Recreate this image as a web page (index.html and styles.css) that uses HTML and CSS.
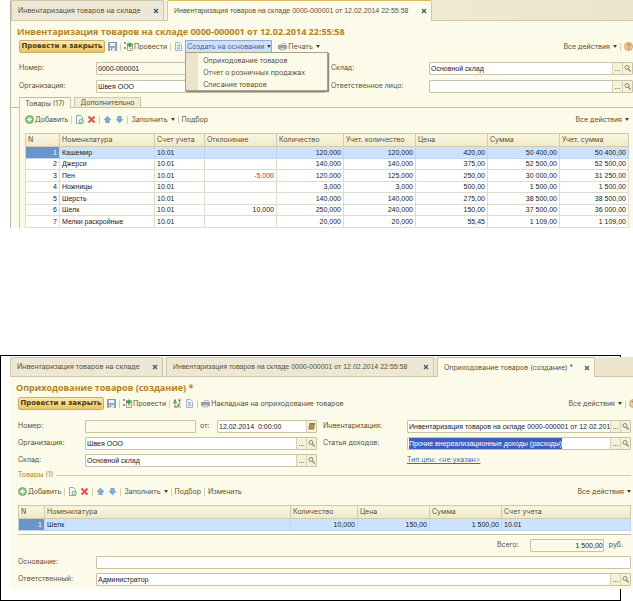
FILE: index.html
```html
<!DOCTYPE html>
<html lang="ru">
<head>
    <meta charset="UTF-8">
    <meta name="viewport" content="width=device-width, initial-scale=1.0">
    <title>Инвентаризация товаров на складе</title>
    <link rel="stylesheet" href="styles.css">
</head>
<body>
    <svg class="sprite" aria-hidden="true">
        <symbol id="i-save" viewBox="0 0 9 9">
            <path d="M.5.5h8v8h-8z" fill="#8fadcc" stroke="#7f9aba"/>
            <path d="M2 1h5v3H2z" fill="#f2f6fb"/>
            <path d="M2 6h5v3H2z" fill="#dbe5ef"/>
            <path d="M3 6.500h1V8H3z" fill="#56749a"/>
        </symbol>
        <symbol id="i-post" viewBox="0 0 9 9">
            <path d="M3.500 1.500h5v7h-5z" fill="#fffef4" stroke="#a8a68c"/>
            <path d="M5 4.500h2.500M5 6.500h2.500" stroke="#c9b672"/>
            <path d="M0 0h2v2H0zM0 5h2v2H0z" fill="#8a93a8"/>
            <path d="M3 2h2V0l3.500 3L5 6V4H3z" fill="#3ea544"/>
        </symbol>
        <symbol id="i-doc" viewBox="0 0 9 9">
            <path d="M1.500.5h4l2 2v6h-6z" fill="#e8f0f8" stroke="#a3b8d0"/>
            <path d="M3 3.500h3M3 5h3M3 6.500h3" stroke="#7f9dc0" stroke-width=".7"/>
        </symbol>
        <symbol id="i-print" viewBox="0 0 9 9">
            <path d="M2.500 3.500l1-2h4l-1 2z" fill="#fff" stroke="#aaa" stroke-width=".8"/>
            <path d="M.5 3.500h8v3h-8z" fill="#a9a9ad" stroke="#88888c" stroke-width=".8"/>
            <path d="M2 6h5v2H2z" fill="#e9e9ea" stroke="#99999c" stroke-width=".6"/>
        </symbol>
        <symbol id="i-dtkt" viewBox="0 0 9 9">
            <path d="M2 .5L.7 4H3.300L2 .5M2 3.500v1M5 4.500v4M7.500 4.500L5 6.500l2.500 2" fill="none" stroke="#3b9848"/>
            <path d="M5 1h3M6.500 1v2.500M1 8h3M1.500 5.500l2 2.500" fill="none" stroke="#c94f42"/>
        </symbol>
        <symbol id="i-add" viewBox="0 0 9 9">
            <circle cx="4.500" cy="4.500" r="4" fill="#7fbf7c" stroke="#6aa96b" stroke-width=".7"/>
            <path d="M4.500 2v5M2 4.500h5" stroke="#fff" stroke-width="1.500"/>
        </symbol>
        <symbol id="i-copy" viewBox="0 0 9 9">
            <path d="M1.500.5h4l2 2v6h-6z" fill="#f4f7fa" stroke="#93a6b8"/>
            <circle cx="6.200" cy="6.200" r="2.500" fill="#7cbd7c"/>
            <path d="M6.200 4.700v3M4.700 6.200h3" stroke="#fff" stroke-width=".9"/>
        </symbol>
        <symbol id="i-del" viewBox="0 0 9 9">
            <path d="M1.500 1.500l6 6M7.500 1.500l-6 6" stroke="#e0524a" stroke-width="2"/>
        </symbol>
        <symbol id="i-up" viewBox="0 0 9 9">
            <path d="M4.500 1.200L7.800 4.500H6.200V7.500h-3.400V4.500H1.200z" fill="#7db1dc" stroke="#5f97c8" stroke-width=".7"/>
        </symbol>
        <symbol id="i-down" viewBox="0 0 9 9">
            <path d="M4.500 7.800L7.800 4.500H6.200V1.500h-3.400v3H1.200z" fill="#7db1dc" stroke="#5f97c8" stroke-width=".7"/>
        </symbol>
        <symbol id="i-help" viewBox="0 0 9 9">
            <circle cx="4.500" cy="4.500" r="4" fill="#f3c99a" stroke="#d08e54" stroke-width=".8"/>
            <path d="M3.200 3.500c0-1.800 2.700-1.600 2.600 0 0 .9-1.300.9-1.300 1.900M4.500 6.200v1" fill="none" stroke="#b3502a" stroke-width=".9"/>
        </symbol>
        <symbol id="i-find" viewBox="0 0 9 9">
            <circle cx="4" cy="3.500" r="2" fill="none" stroke="#857d58" stroke-width=".9"/>
            <path d="M5.500 5.200L7.500 7.500" stroke="#857d58" stroke-width="1.200"/>
        </symbol>
        <symbol id="i-date" viewBox="0 0 9 9">
            <path d="M2.500 1h5.500l-1 6.500H1.500z" fill="#8b7b35"/>
            <path d="M3.300 3.500h3.500M3 5.500h3.500" stroke="#d9cd92" stroke-width=".7"/>
        </symbol>
        <symbol id="i-close" viewBox="0 0 6 6">
            <path d="M1 1l4 4M5 1L1 5" stroke="#3f5c76" stroke-width="1.300"/>
        </symbol>
    </svg>

    <section class="window inventory">
        <nav class="tabs">
            <div class="tab tab-list">Инвентаризация товаров на складе <button class="close" aria-label="Закрыть"><svg><use href="#i-close"/></svg></button></div>
            <div class="tab tab-doc active">Инвентаризация товаров на складе 0000-000001 от 12.02.2014 22:55:58 <button class="close" aria-label="Закрыть"><svg><use href="#i-close"/></svg></button></div>
        </nav>
        <h1>Инвентаризация товаров на складе 0000-000001 от 12.02.2014 22:55:58</h1>
        <div class="toolbar">
            <button class="primary">Провести и закрыть</button>
            <button aria-label="Записать"><svg class="icon"><use href="#i-save"/></svg></button>
            <i class="sep"></i>
            <button><svg class="icon"><use href="#i-post"/></svg>Провести</button>
            <i class="sep"></i>
            <button aria-label="Отчет"><svg class="icon"><use href="#i-doc"/></svg></button>
            <i class="sep"></i>
            <div class="dropdown">
                <button class="opened">Создать на основании<span class="arrow"></span></button>
                <div class="menu">
                    <button>Оприходование товаров</button>
                    <button>Отчет о розничных продажах</button>
                    <button>Списание товаров</button>
                </div>
            </div>
            <button><svg class="icon"><use href="#i-print"/></svg>Печать<span class="arrow"></span></button>
            <div class="right">
                <button>Все действия<span class="arrow"></span></button>
                <i class="sep"></i>
                <button aria-label="Справка"><svg class="icon"><use href="#i-help"/></svg></button>
            </div>
        </div>
        <div class="form">
            <label for="num">Номер:</label>
            <div class="field muted"><input id="num" type="text" value="0000-000001"></div>
            <label for="store">Склад:</label>
            <div class="field"><input id="store" type="text" value="Основной склад"><button>...</button><button aria-label="Открыть"><svg class="icon"><use href="#i-find"/></svg></button></div>
            <label for="org">Организация:</label>
            <div class="field"><input id="org" type="text" value="Швея ООО"><button>...</button><button aria-label="Открыть"><svg class="icon"><use href="#i-find"/></svg></button></div>
            <label for="person">Ответственное лицо:</label>
            <div class="field"><input id="person" type="text"><button>...</button><button aria-label="Открыть"><svg class="icon"><use href="#i-find"/></svg></button></div>
        </div>
        <div class="pages">
            <button class="page active">Товары (17)</button>
            <button class="page">Дополнительно</button>
        </div>
        <div class="page-body">
            <div class="toolbar">
                <button><svg class="icon"><use href="#i-add"/></svg>Добавить</button>
                <i class="sep"></i>
                <button aria-label="Скопировать"><svg class="icon"><use href="#i-copy"/></svg></button>
                <button aria-label="Удалить"><svg class="icon"><use href="#i-del"/></svg></button>
                <i class="sep"></i>
                <button aria-label="Вверх"><svg class="icon"><use href="#i-up"/></svg></button>
                <button aria-label="Вниз"><svg class="icon"><use href="#i-down"/></svg></button>
                <i class="sep"></i>
                <button>Заполнить<span class="arrow"></span></button>
                <i class="sep"></i>
                <button>Подбор</button>
                <div class="right"><button>Все действия<span class="arrow"></span></button></div>
            </div>
            <table class="goods">
                <colgroup><col class="w-n"><col class="w-name"><col class="w-acc"><col class="w-num"><col class="w-qty"><col class="w-num"><col class="w-num"><col class="w-num"><col></colgroup>
                <thead>
                    <tr><th>N</th><th>Номенклатура</th><th>Счет учета</th><th>Отклонение</th><th>Количество</th><th>Учет. количество</th><th>Цена</th><th>Сумма</th><th>Учет. сумма</th></tr>
                </thead>
                <tbody>
                    <tr class="selected"><td>1</td><td>Кашемир</td><td>10.01</td><td></td><td>120,000</td><td>120,000</td><td>420,00</td><td>50 400,00</td><td>50 400,00</td></tr>
                    <tr><td>2</td><td>Джерси</td><td>10.01</td><td></td><td>140,000</td><td>140,000</td><td>375,00</td><td>52 500,00</td><td>52 500,00</td></tr>
                    <tr><td>3</td><td>Пен</td><td>10.01</td><td class="minus">-5,000</td><td>120,000</td><td>125,000</td><td>250,00</td><td>30 000,00</td><td>31 250,00</td></tr>
                    <tr><td>4</td><td>Ножницы</td><td>10.01</td><td></td><td>3,000</td><td>3,000</td><td>500,00</td><td>1 500,00</td><td>1 500,00</td></tr>
                    <tr><td>5</td><td>Шерсть</td><td>10.01</td><td></td><td>140,000</td><td>140,000</td><td>275,00</td><td>38 500,00</td><td>38 500,00</td></tr>
                    <tr><td>6</td><td>Шелк</td><td>10.01</td><td>10,000</td><td>250,000</td><td>240,000</td><td>150,00</td><td>37 500,00</td><td>36 000,00</td></tr>
                    <tr><td>7</td><td>Мелки раскройные</td><td>10.01</td><td></td><td>20,000</td><td>20,000</td><td>55,45</td><td>1 109,00</td><td>1 109,00</td></tr>
                </tbody>
            </table>
        </div>
    </section>

    <div class="frame">
        <section class="window receipt">
            <nav class="tabs">
                <div class="tab tab-list">Инвентаризация товаров на складе <button class="close" aria-label="Закрыть"><svg><use href="#i-close"/></svg></button></div>
                <div class="tab tab-doc">Инвентаризация товаров на складе 0000-000001 от 12.02.2014 22:55:58 <button class="close" aria-label="Закрыть"><svg><use href="#i-close"/></svg></button></div>
                <div class="tab tab-new active">Оприходование товаров (создание) * <button class="close" aria-label="Закрыть"><svg><use href="#i-close"/></svg></button></div>
            </nav>
            <h1>Оприходование товаров (создание) *</h1>
            <div class="toolbar main">
                <button class="primary">Провести и закрыть</button>
                <button aria-label="Записать"><svg class="icon"><use href="#i-save"/></svg></button>
                <i class="sep"></i>
                <button><svg class="icon"><use href="#i-post"/></svg>Провести</button>
                <i class="sep"></i>
                <button aria-label="Дт Кт"><svg class="icon"><use href="#i-dtkt"/></svg></button>
                <button aria-label="Отчет"><svg class="icon"><use href="#i-doc"/></svg></button>
                <i class="sep"></i>
                <button><svg class="icon"><use href="#i-print"/></svg>Накладная на оприходование товаров</button>
                <div class="right">
                    <button>Все действия<span class="arrow"></span></button>
                    <i class="sep"></i>
                    <button aria-label="Справка"><svg class="icon"><use href="#i-help"/></svg></button>
                </div>
            </div>
            <div class="form">
                <label for="num2">Номер:</label>
                <div class="number-date">
                    <div class="field muted"><input id="num2" type="text"></div>
                    <label for="date">от:</label>
                    <div class="field"><input id="date" type="text" value="12.02.2014  0:00:00"><button aria-label="Календарь"><svg class="icon"><use href="#i-date"/></svg></button></div>
                </div>
                <label for="inv">Инвентаризация:</label>
                <div class="field"><input id="inv" type="text" value="Инвентаризация товаров на складе 0000-000001 от 12.02.2014 22:55:58"><button>...</button><button aria-label="Открыть"><svg class="icon"><use href="#i-find"/></svg></button></div>
                <label for="org2">Организация:</label>
                <div class="field"><input id="org2" type="text" value="Швея ООО"><button>...</button><button aria-label="Открыть"><svg class="icon"><use href="#i-find"/></svg></button></div>
                <label for="income">Статья доходов:</label>
                <div class="field"><input id="income" type="text" value="Прочие внереализационные доходы (расходы)"><button>...</button><button aria-label="Открыть"><svg class="icon"><use href="#i-find"/></svg></button></div>
                <label for="store2">Склад:</label>
                <div class="field"><input id="store2" type="text" value="Основной склад"><button>...</button><button aria-label="Открыть"><svg class="icon"><use href="#i-find"/></svg></button></div>
                <a href="#">Тип цен: &lt;не указан&gt;</a>
            </div>
            <h2>Товары (1)</h2>
            <div class="toolbar">
                <button><svg class="icon"><use href="#i-add"/></svg>Добавить</button>
                <i class="sep"></i>
                <button aria-label="Скопировать"><svg class="icon"><use href="#i-copy"/></svg></button>
                <button aria-label="Удалить"><svg class="icon"><use href="#i-del"/></svg></button>
                <i class="sep"></i>
                <button aria-label="Вверх"><svg class="icon"><use href="#i-up"/></svg></button>
                <button aria-label="Вниз"><svg class="icon"><use href="#i-down"/></svg></button>
                <i class="sep"></i>
                <button>Заполнить<span class="arrow"></span></button>
                <i class="sep"></i>
                <button>Подбор</button>
                <i class="sep"></i>
                <button>Изменить</button>
                <div class="right"><button>Все действия<span class="arrow"></span></button></div>
            </div>
            <div class="grid-box">
                <table class="goods">
                    <colgroup><col class="w-n"><col><col class="w-qty"><col class="w-num"><col class="w-num"><col class="w-last"></colgroup>
                    <thead>
                        <tr><th>N</th><th>Номенклатура</th><th>Количество</th><th>Цена</th><th>Сумма</th><th>Счет учета</th></tr>
                    </thead>
                    <tbody>
                        <tr class="selected"><td>1</td><td>Шелк</td><td>10,000</td><td>150,00</td><td>1 500,00</td><td>10.01</td></tr>
                    </tbody>
                </table>
            </div>
            <div class="total">
                <label for="total">Всего:</label>
                <div class="field muted"><input id="total" type="text" value="1 500,00" readonly></div>
                <span>руб.</span>
            </div>
            <div class="footer">
                <label for="basis">Основание:</label>
                <div class="field"><input id="basis" type="text"></div>
                <label for="resp">Ответственный:</label>
                <div class="field"><input id="resp" type="text" value="Администратор"><button>...</button><button aria-label="Открыть"><svg class="icon"><use href="#i-find"/></svg></button></div>
            </div>
        </section>
    </div>

    <script>
        // Текст в поле "Статья доходов" выделен при открытии
        const income = document.getElementById('income');
        income.focus();
        income.select();
    </script>
</body>
</html>
```

FILE: styles.css
```css
* {
    box-sizing: border-box;
}

body {
    margin: 0;
    background: #fff;
    color: #5d5134;
    font: 7px/12px Inter, "Liberation Sans", sans-serif;
    overflow-x: hidden;
}

button, input {
    font: inherit;
    color: inherit;
    margin: 0;
    padding: 0;
    border: 0;
    background: none;
    outline: none;
}

.sprite {
    display: none;
}

.icon {
    width: 9px;
    height: 9px;
    flex: none;
}

.window {
    background: #fcfae9;
}

.inventory {
    margin-left: 10px;
    border-left: 1px solid #b9b59d;
}

/* Вкладки окон */
.tabs {
    display: flex;
    gap: 3px;
    height: 21px;
    background: linear-gradient(90deg, #f8f5df, #ece4ca);
    border-bottom: 1px solid #cfc8a6;
    font-family: "Liberation Sans", Arial, sans-serif;
}

.tab {
    display: flex;
    flex: none;
    align-items: center;
    justify-content: space-between;
    height: 20px;
    padding: 0 4px 0 6px;
    background: #ece8d5;
    border: 1px solid #cfc8a6;
    border-bottom: 0;
    border-radius: 2px 2px 0 0;
    white-space: nowrap;
}

.tab.active {
    height: 21px;
    background: #fcfae9;
    border-top-color: #d9b95c;
}

.tab-list {
    width: 153px;
    font-family: Inter, "Liberation Sans", sans-serif;
}

.tab-doc {
    width: 265px;
}

.receipt .tab-doc {
    width: 268px;
}

.tab-new {
    width: 158px;
    font-family: Inter, "Liberation Sans", sans-serif;
}

.close {
    display: flex;
}

.close svg {
    width: 6px;
    height: 6px;
}

h1 {
    margin: 0;
    padding: 5px 6px 2px;
    color: #b5831c;
    font: bold 9px/12px "Open Sans", Verdana, sans-serif;
    white-space: nowrap;
}

/* Командная панель */
.toolbar {
    display: flex;
    align-items: center;
    gap: 3px;
    height: 13px;
    padding-left: 8px;
    white-space: nowrap;
}

.toolbar button {
    display: flex;
    align-items: center;
    gap: 1px;
    line-height: 11px;
}

.toolbar .primary {
    justify-content: center;
    width: 86px;
    height: 13px;
    background: linear-gradient(#fbe9ae, #e8c466);
    border: 1px solid #cfae5b;
    border-radius: 2px;
    color: #4c3a0c;
    font-family: "DejaVu Sans", Verdana, sans-serif;
    font-weight: bold;
}

.sep {
    width: 1px;
    height: 8px;
    background: #d6cfb0;
}

.arrow {
    margin-left: 2px;
    border: 2px solid transparent;
    border-top: 3px solid #4d4328;
    border-bottom: 0;
}

.right {
    display: flex;
    align-items: center;
    gap: 3px;
    margin-left: auto;
}

.dropdown {
    position: relative;
    margin: 0 3px 0 -5px;
}

.toolbar .opened {
    height: 13px;
    width: 87px;
    justify-content: space-between;
    padding: 0 1px;
    background: #cfe0f8;
    border: 1px solid #8aa9d6;
    color: #3f62a8;
}

.menu {
    position: absolute;
    top: 12px;
    left: 0;
    z-index: 1;
    width: 143px;
    padding: 1px 0 0 17px;
    background: linear-gradient(90deg, #ece4cb 12px, #fcfae9 12px);
    border: 1px solid #a8a288;
    box-shadow: 1px 1px 1px #8f8b7a;
}

.menu button {
    width: 100%;
    height: 12px;
}

/* Реквизиты */
.form {
    display: grid;
    grid-template-columns: 77px 229px 104px 1fr;
    row-gap: 5px;
    padding: 9px 0 0 8px;
}

.form > label:nth-of-type(even) {
    padding-left: 6px;
}

.field {
    display: flex;
    min-width: 0;
    height: 13px;
    background: #fff;
    border: 1px solid #c9c3a5;
    border-radius: 1px;
}

.muted {
    background: #fbf9e8;
}

.field input {
    flex: 1;
    min-width: 0;
    padding-left: 1px;
    color: #222;
    font-family: "Liberation Sans", Arial, sans-serif;
}

.field button {
    display: flex;
    align-items: center;
    justify-content: center;
    width: 10px;
    background: #f6f1d8;
    border-left: 1px solid #d8d2b2;
}

.field input::selection {
    background: #3f5fc0;
    color: #fff;
}

/* Страницы формы */
.pages {
    display: flex;
    gap: 3px;
    height: 15px;
    padding: 4px 0 0 8px;
    border-bottom: 1px solid #c9c3a5;
}

.page {
    width: 67px;
    height: 10px;
    line-height: 9px;
    background: #f1ecd6;
    border: 1px solid #cfc8a6;
    border-bottom: 0;
}

.page.active {
    width: 52px;
    height: 11px;
    background: #fcfae9;
    border-top-color: #d9b95c;
}

.page-body {
    margin-left: 8px;
    padding: 5px 4px 0 5px;
    border-left: 1px solid #cfc8a6;
}

.page-body .toolbar {
    padding-left: 0;
}

/* Табличная часть */
.goods {
    width: 100%;
    table-layout: fixed;
    border-collapse: collapse;
    background: #fff;
    color: #222;
}

.page-body .goods {
    margin-top: 7px;
}

.goods th, .goods td {
    height: 12px;
    padding: 0 2px;
    border: 1px solid #dcdccf;
    line-height: 10px;
    text-align: right;
    white-space: nowrap;
}

.goods td {
    font-family: "Liberation Sans", Arial, sans-serif;
}

.goods tbody tr:nth-child(even) td {
    height: 11px;
}

.goods th {
    height: 13px;
    background: linear-gradient(#faf6e1, #efe8cb);
    border-color: #d3ccab;
    color: #5d5134;
    font-weight: normal;
    text-align: left;
}

.goods td:nth-child(2), .inventory td:nth-child(3), .receipt td:last-child {
    text-align: left;
}

.goods .selected td {
    background: #cce3ff;
    border-color: #c0d6ee;
}

.goods .selected td:first-child {
    background: #6b93cc;
    color: #fff;
}

.goods .minus {
    color: #e8201c;
}

.w-n { width: 34px; }
.w-name { width: 95px; }
.w-acc { width: 50px; }
.w-num { width: 72px; }
.w-qty { width: 67px; }
.w-last { width: 129px; }

/* Второе окно в рамке */
.frame {
    margin: 127px 12px 0 0;
    padding: 1px 0 11px 9px;
    border: 1px solid #000;
}

.receipt {
    margin-right: -13px;
    padding-bottom: 3px;
}

.receipt .tabs {
    height: 20px;
}

.receipt .tab {
    height: 19px;
}

.receipt .tab.active {
    height: 20px;
}

.receipt h1 {
    padding-bottom: 3px;
}

.receipt .toolbar {
    padding-right: 2px;
}

/* кнопка справки уходит за край окна */
.receipt .main {
    margin-right: -5px;
    padding-right: 0;
}

.receipt .form {
    grid-template-columns: 67px 232px 90px 1fr;
    row-gap: 4px;
    padding: 10px 2px 0 8px;
}

.receipt .form > a {
    grid-column: 4;
    color: #3f6ea8;
}

.number-date {
    display: grid;
    grid-template-columns: 111px 21px 1fr;
}

.number-date label {
    padding-left: 4px;
}

h2 {
    display: flex;
    align-items: center;
    gap: 3px;
    margin: 2px 2px 4px 8px;
    color: #b5831c;
    font: inherit;
}

h2::after {
    content: "";
    flex: 1;
    border-top: 1px solid #d3ccab;
}

.grid-box {
    margin: 7px 2px 0 8px;
    padding-bottom: 3px;
    background: #fff;
    border-bottom: 1px solid #c9c3a5;
}

.receipt .w-n {
    width: 26px;
}

.total {
    display: flex;
    justify-content: flex-end;
    gap: 5px;
    margin-top: 4px;
    padding-right: 10px;
}

.total .field {
    width: 74px;
    margin-left: 6px;
}

.total input {
    text-align: right;
}

.footer {
    display: grid;
    grid-template-columns: 78px 1fr;
    row-gap: 4px;
    padding: 4px 2px 0 8px;
}
```
